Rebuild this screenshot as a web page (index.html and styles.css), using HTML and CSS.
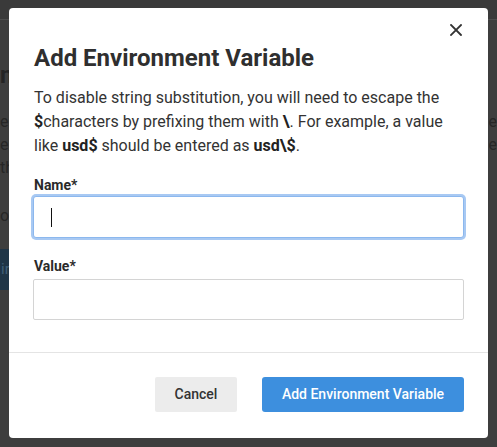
FILE: index.html
```html
<!DOCTYPE html>
<html lang="en">
<head>
<meta charset="utf-8">
<title>Add Environment Variable</title>
<link rel="stylesheet" href="styles.css">
</head>
<body>
<div class="page">
  <div class="page-header"></div>
  <div class="page-content">
    <div class="page-title">n</div>
    <div class="page-line"><span>er</span><span>he</span></div>
    <div class="page-line"><span>er</span><span>e</span></div>
    <div class="page-line"><span>th</span><span></span></div>
    <div class="page-line gap"><span>oc</span><span></span></div>
    <div class="page-button">ir</div>
  </div>
</div>

<div class="modal">
  <button class="close" aria-label="Close">
    <svg width="12" height="12" viewBox="0 0 12 12"><path d="M1 1 L11 11 M11 1 L1 11" stroke="#333" stroke-width="1.8" stroke-linecap="square" fill="none"/></svg>
  </button>
  <div class="modal-body">
    <h2 class="modal-title">Add Environment Variable</h2>
    <p class="modal-text">To disable string substitution, you will need to escape the <b>$</b>characters by prefixing them with <b>\</b>. For example, a value like <b>usd$</b> should be entered as <b>usd\$</b>.</p>
    <label class="field-label">Name*</label>
    <div class="input focused"><span class="caret"></span></div>
    <label class="field-label second">Value*</label>
    <div class="input"></div>
  </div>
  <div class="modal-footer">
    <button class="btn btn-cancel">Cancel</button>
    <button class="btn btn-primary">Add Environment Variable</button>
  </div>
</div>
</body>
</html>
```

FILE: styles.css
```css
* { box-sizing: border-box; }
html, body { margin: 0; padding: 0; }
body {
  width: 497px;
  height: 447px;
  overflow: hidden;
  background: #3e3e3e;
  font-family: Roboto, "Liberation Sans", sans-serif;
  position: relative;
}

/* dimmed page behind */
.page { width: 497px; }
.page-header {
  height: 20px;
  background: #3a3a3a;
  border-bottom: 1px solid #4d4d4d;
}
.page-content { display: flex; flex-direction: column; }
.page-title {
  margin-top: 40px;
  font-size: 24px;
  line-height: 30px;
  font-weight: 700;
  color: #242424;
}
.page-line {
  display: flex;
  justify-content: space-between;
  font-size: 16px;
  line-height: 23px;
  color: #262626;
}
.page-title + .page-line { margin-top: 20px; }
.page-line.gap { margin-top: 25px; }
.page-button {
  margin-top: 22px;
  width: 40px;
  height: 41px;
  background: #1f3547;
  color: #3f5f78;
  font-size: 15px;
  line-height: 41px;
  padding-left: 1px;
}

/* modal */
.modal {
  position: absolute;
  left: 9px;
  top: 8px;
  width: 479px;
  background: #fff;
  border-radius: 4px;
}
.close {
  position: absolute;
  top: 16px;
  right: 26px;
  width: 12px;
  height: 12px;
  padding: 0;
  border: 0;
  background: none;
  display: block;
}
.close svg { display: block; }
.modal-body {
  padding: 35px 24px 32px 24px;
  display: flex;
  flex-direction: column;
}
.modal-title {
  margin: 0 0 0 1px;
  font-size: 24px;
  line-height: 30px;
  font-weight: 700;
  color: #2f2f2f;
}
.modal-text {
  margin: 13px 0 0 1px;
  font-size: 16px;
  line-height: 24px;
  color: #333;
}
.modal-text b { font-weight: 700; color: #222; }
.field-label {
  margin: 17px 0 1px 1px;
  font-size: 14px;
  line-height: 20px;
  font-weight: 700;
  color: #2a2a2a;
}
.field-label.second { margin-top: 18px; margin-bottom: 3px; }
.input {
  height: 41px;
  border: 1px solid #d4d4d4;
  border-radius: 2px;
  background: #fff;
  position: relative;
}
.input.focused {
  height: 42px;
  border-color: #8cb8ee;
  box-shadow: 0 0 0 2px #a8c9f3;
  border-radius: 3px;
}
.caret {
  position: absolute;
  left: 17px;
  top: 11px;
  width: 1px;
  height: 19px;
  background: #111;
}
.modal-footer {
  border-top: 1px solid #e4e4e4;
  padding: 24px 24px 26px 24px;
  display: flex;
  justify-content: flex-end;
  gap: 25px;
}
.btn {
  height: 35px;
  border: 0;
  border-radius: 3px;
  padding: 0;
  font-family: Roboto, "Liberation Sans", sans-serif;
  font-size: 14px;
  font-weight: 500;
  line-height: 35px;
  white-space: nowrap;
  text-align: center;
}
.btn-cancel {
  width: 82px;
  background: #ececec;
  color: #333;
  border-radius: 2px;
}
.btn-primary {
  width: 202px;
  background: #3d8fde;
  color: #fff;
}
```
